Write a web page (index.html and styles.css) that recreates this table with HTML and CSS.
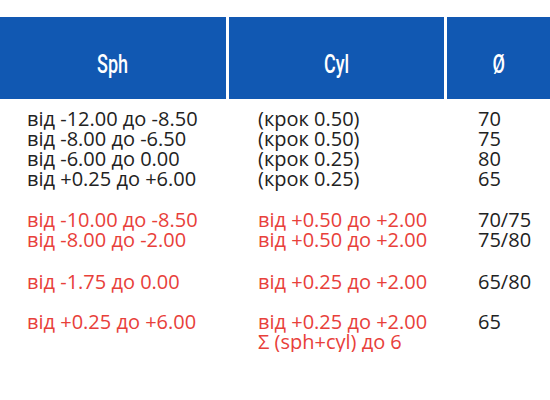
FILE: index.html
```html
<!DOCTYPE html>
<html lang="uk">
<head>
<meta charset="utf-8">
<link rel="stylesheet" href="styles.css">
</head>
<body>
<div class="table">
  <div class="head">
    <div class="hcell"><span class="htxt">Sph</span></div>
    <div class="hcell"><span class="htxt">Cyl</span></div>
    <div class="hcell"><span class="htxt">Ø</span></div>
  </div>
  <div class="group g1">
    <div class="c1">від -12.00 до -8.50<br>від -8.00 до -6.50<br>від -6.00 до 0.00<br>від +0.25 до +6.00</div>
    <div class="c2">(крок 0.50)<br>(крок 0.50)<br>(крок 0.25)<br>(крок 0.25)</div>
    <div class="c3">70<br>75<br>80<br>65</div>
  </div>
  <div class="group g2">
    <div class="c1 red">від -10.00 до -8.50<br>від -8.00 до -2.00</div>
    <div class="c2 red">від +0.50 до +2.00<br>від +0.50 до +2.00</div>
    <div class="c3">70/75<br>75/80</div>
  </div>
  <div class="group g3">
    <div class="c1 red">від -1.75 до 0.00</div>
    <div class="c2 red">від +0.25 до +2.00</div>
    <div class="c3">65/80</div>
  </div>
  <div class="group g4">
    <div class="c1 red">від +0.25 до +6.00</div>
    <div class="c2 red">від +0.25 до +2.00<br>Σ (sph+cyl) до 6</div>
    <div class="c3">65</div>
  </div>
</div>
</body>
</html>
```
FILE: styles.css
```css
html, body {
  margin: 0;
  padding: 0;
  background: #ffffff;
}
.table {
  width: 550px;
  padding-top: 17px;
  font-family: "Open Sans", "Noto Sans", sans-serif;
}
.head {
  display: grid;
  grid-template-columns: 226px 215px 103px;
  column-gap: 3px;
  height: 82px;
}
.hcell {
  background: #1158b2;
  color: #ffffff;
  display: flex;
  align-items: center;
  justify-content: center;
  padding-top: 13px;
  box-sizing: border-box;
}
.htxt {
  display: inline-block;
  font-family: Roboto, "Liberation Sans", sans-serif;
  font-weight: 500;
  font-size: 25px;
  line-height: 30px;
  transform: scaleX(0.72);
}
.group {
  display: grid;
  grid-template-columns: 226px 215px 103px;
  column-gap: 3px;
  font-size: 20px;
  line-height: 20px;
  color: #222222;
}
.g1 { padding-top: 10px; }
.g2 { padding-top: 21px; }
.g3 { padding-top: 22px; }
.g4 { padding-top: 20px; }
.c1 { padding-left: 27px; }
.c2 { padding-left: 29px; }
.c3 { padding-left: 31px; }
.red { color: #e8403a; }
```
